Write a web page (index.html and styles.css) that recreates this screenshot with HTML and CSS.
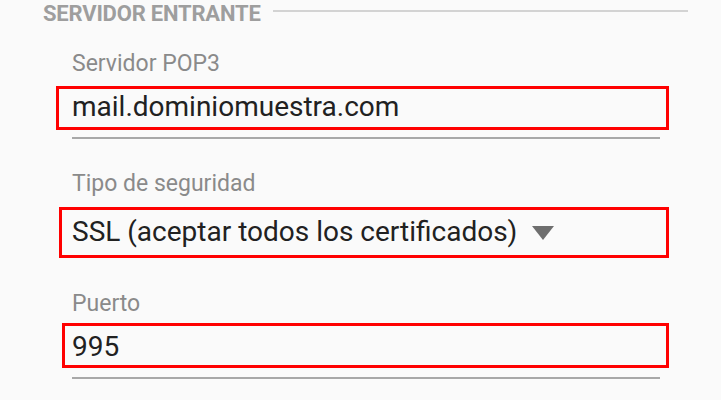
FILE: index.html
```html
<!DOCTYPE html>
<html lang="es">
<head>
    <meta charset="UTF-8">
    <meta name="viewport" content="width=device-width, initial-scale=1.0">
    <title>Servidor entrante</title>
    <link rel="stylesheet" href="styles.css">
</head>
<body>
    <header class="section-head">
        <h2 class="section-title">SERVIDOR ENTRANTE</h2>
        <div class="section-rule"></div>
    </header>

    <div class="field">
        <p class="field-label">Servidor POP3</p>
        <p class="field-value">mail.dominiomuestra.com</p>
        <div class="field-line"></div>
        <div class="mark mark-server"></div>
    </div>

    <div class="field">
        <p class="field-label">Tipo de seguridad</p>
        <div class="field-value spinner">
            <span>SSL (aceptar todos los certificados)</span>
            <span class="spinner-arrow"></span>
        </div>
        <div class="mark mark-security"></div>
    </div>

    <div class="field">
        <p class="field-label">Puerto</p>
        <p class="field-value">995</p>
        <div class="field-line"></div>
        <div class="mark mark-port"></div>
    </div>
</body>
</html>
```

FILE: styles.css
```css
/* Ajustes de cuenta - servidor entrante */
body {
    font-family: Roboto, "Noto Sans", sans-serif;
    margin: 0;
    padding: 0;
    background-color: #fafafa;
    color: #212121;
}
.section-head {
    display: flex;
    align-items: flex-start;
    height: 40px;
    padding-left: 43px;
    padding-right: 33px;
    box-sizing: border-box;
}
.section-title {
    margin: 0;
    font-size: 22px;
    line-height: 27px;
    letter-spacing: -0.2px;
    font-weight: bold;
    color: #9e9e9e;
    white-space: nowrap;
}
.section-rule {
    flex: 1;
    height: 2px;
    margin-top: 10px;
    margin-left: 12px;
    background-color: #d3d3d3;
}
.field {
    position: relative;
    height: 120px;
    padding-left: 72px;
    padding-right: 61px;
    box-sizing: border-box;
}
.field-label {
    margin: 0;
    padding-top: 10px;
    font-size: 23px;
    line-height: 27px;
    color: #8a8a8a;
}
.field-value {
    margin: 0;
    padding-top: 14px;
    font-size: 28px;
    line-height: 32px;
    color: #212121;
}
.field-line {
    margin-top: 14px;
    height: 2px;
    background-color: #a8a8a8;
}
.spinner {
    display: flex;
    align-items: center;
    padding-top: 19px;
}
.spinner-arrow {
    width: 0;
    height: 0;
    margin-left: 15px;
    margin-top: 2px;
    border-left: 11.5px solid transparent;
    border-right: 11.5px solid transparent;
    border-top: 14px solid #6e6e6e;
}
/* marcas rojas sobre los campos */
.mark {
    position: absolute;
    border: 3px solid #ff0000;
    box-sizing: border-box;
}
.mark-server {
    left: 56px;
    top: 46px;
    width: 613px;
    height: 44px;
}
.mark-security {
    left: 59px;
    top: 47px;
    width: 610px;
    height: 51px;
}
.mark-port {
    left: 62px;
    top: 43px;
    width: 607px;
    height: 45px;
}
```
